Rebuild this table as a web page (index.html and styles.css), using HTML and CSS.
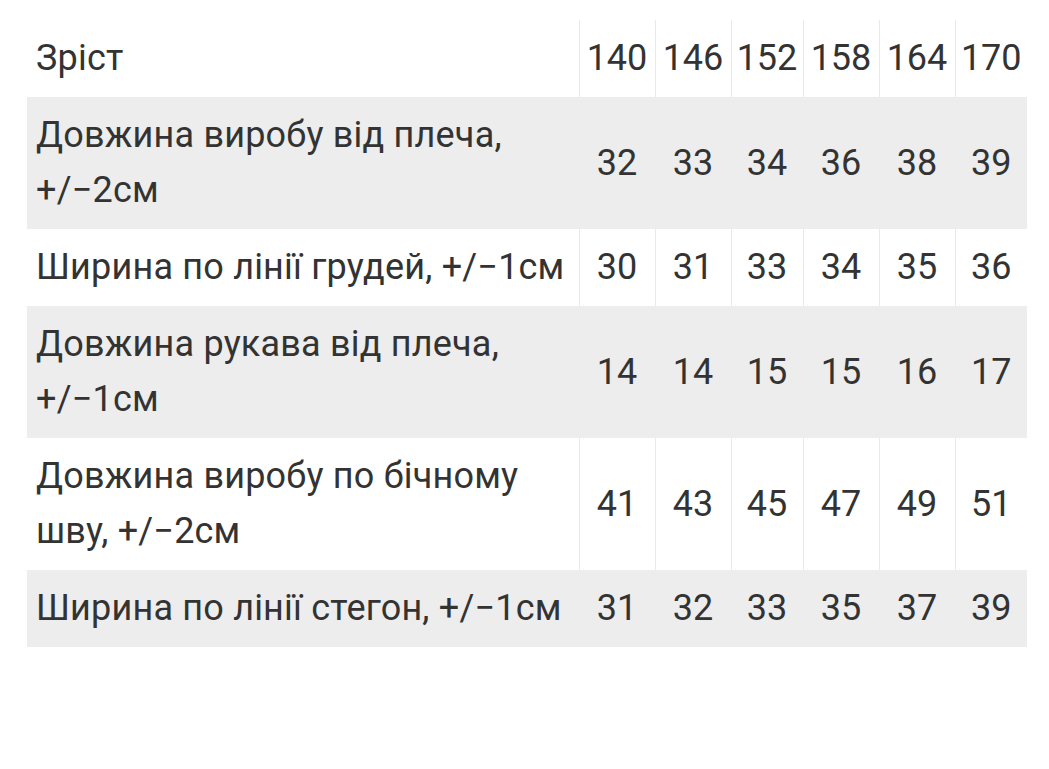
FILE: index.html
```html
<!DOCTYPE html>
<html lang="uk">
<head>
<meta charset="utf-8">
<link rel="stylesheet" href="styles.css">
</head>
<body>
<div class="wrap">
<table class="sizes">
  <colgroup>
    <col class="c-label">
    <col class="c-a"><col class="c-a"><col class="c-b"><col class="c-a"><col class="c-a"><col class="c-b">
  </colgroup>
  <tr class="odd">
    <td>Зріст</td><td>140</td><td>146</td><td>152</td><td>158</td><td>164</td><td>170</td>
  </tr>
  <tr class="even">
    <td>Довжина виробу від плеча, <span class="nw">+/−2см</span></td><td>32</td><td>33</td><td>34</td><td>36</td><td>38</td><td>39</td>
  </tr>
  <tr class="odd">
    <td><span class="nw">Ширина по лінії грудей, +/−1см</span></td><td>30</td><td>31</td><td>33</td><td>34</td><td>35</td><td>36</td>
  </tr>
  <tr class="even">
    <td>Довжина рукава від плеча, <span class="nw">+/−1см</span></td><td>14</td><td>14</td><td>15</td><td>15</td><td>16</td><td>17</td>
  </tr>
  <tr class="odd">
    <td>Довжина виробу по бічному <span class="nw">шву, +/−2см</span></td><td>41</td><td>43</td><td>45</td><td>47</td><td>49</td><td>51</td>
  </tr>
  <tr class="even">
    <td><span class="nw">Ширина по лінії стегон, +/−1см</span></td><td>31</td><td>32</td><td>33</td><td>35</td><td>37</td><td>39</td>
  </tr>
</table>
</div>
</body>
</html>
```
FILE: styles.css
```css
html, body {
  margin: 0;
  padding: 0;
  background: #fff;
}
.wrap {
  padding: 20px 24px 0 27px;
}
.sizes {
  border-collapse: collapse;
  table-layout: fixed;
  width: 998px;
  font-family: Roboto, "Noto Sans", sans-serif;
  font-size: 36px;
  line-height: 55px;
  color: #333;
}
.c-label { width: 552px; }
.c-a { width: 76px; }
.c-b { width: 72px; }
.sizes td {
  border-left: 1px solid #e9e9e9;
  padding: 11px 0;
  text-align: center;
  vertical-align: middle;
  white-space: nowrap;
}
.sizes td:first-child {
  border-left: none;
  text-align: left;
  padding-left: 9px;
  padding-right: 4px;
  white-space: normal;
  letter-spacing: 0.2px;
}
.nw {
  white-space: nowrap;
}
.sizes tr.even {
  background: #ededed;
}
.sizes tr.even td {
  border-left-color: #ededed;
}
```
